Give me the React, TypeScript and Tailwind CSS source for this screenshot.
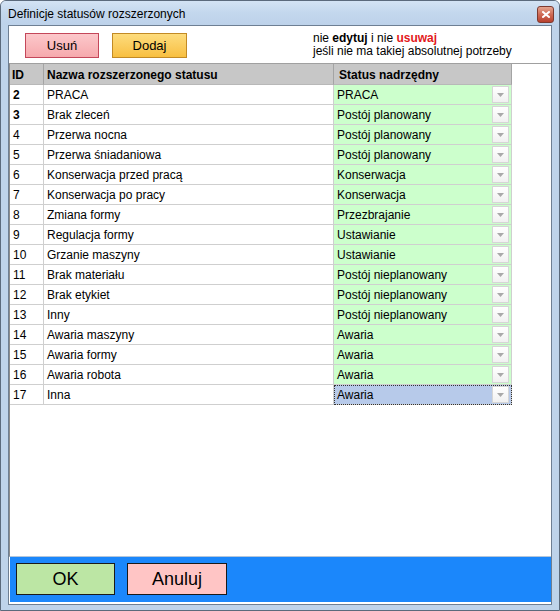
import React from "react";

type Row = { id: string; name: string; status: string; bold?: boolean };

const rows: Row[] = [
  { id: "2", name: "PRACA", status: "PRACA", bold: true },
  { id: "3", name: "Brak zleceń", status: "Postój planowany", bold: true },
  { id: "4", name: "Przerwa nocna", status: "Postój planowany" },
  { id: "5", name: "Przerwa śniadaniowa", status: "Postój planowany" },
  { id: "6", name: "Konserwacja przed pracą", status: "Konserwacja" },
  { id: "7", name: "Konserwacja po pracy", status: "Konserwacja" },
  { id: "8", name: "Zmiana formy", status: "Przezbrajanie" },
  { id: "9", name: "Regulacja formy", status: "Ustawianie" },
  { id: "10", name: "Grzanie maszyny", status: "Ustawianie" },
  { id: "11", name: "Brak materiału", status: "Postój nieplanowany" },
  { id: "12", name: "Brak etykiet", status: "Postój nieplanowany" },
  { id: "13", name: "Inny", status: "Postój nieplanowany" },
  { id: "14", name: "Awaria maszyny", status: "Awaria" },
  { id: "15", name: "Awaria formy", status: "Awaria" },
  { id: "16", name: "Awaria robota", status: "Awaria" },
  { id: "17", name: "Inna", status: "Awaria" },
];

function DropBtn() {
  return (
    <div className="w-[17px] h-[17px] mr-[2px] shrink-0 border border-[#d6d6d6] bg-gradient-to-b from-[#ffffff] to-[#f1f1f1] flex items-center justify-center">
      <svg width="7" height="4" viewBox="0 0 7 4">
        <path d="M0 0 L7 0 L3.5 4 Z" fill="#a9a9a9" />
      </svg>
    </div>
  );
}

export default function App() {
  return (
    <div className="w-[560px] h-[611px] flex flex-col bg-[#bed3ea] border border-[#5b6a7c] rounded-t-[6px] font-['Liberation_Sans',Arial,sans-serif] text-[12px] text-black overflow-hidden">
      {/* title bar */}
      <div className="h-[24px] shrink-0 flex items-center justify-between pl-[7px] pr-[5px] bg-gradient-to-b from-[#d3e3f4] via-[#c3d7ed] to-[#bdd2ea]">
        <span className="text-[12px] leading-none text-black mt-[1px]">Definicje statusów rozszerzonych</span>
        <div className="w-[17px] h-[17px] mt-[2px] rounded-[3px] border border-[#7d3a30] bg-gradient-to-b from-[#e3a48f] via-[#cf6a55] to-[#b8402e] flex items-center justify-center">
          <svg width="8" height="7" viewBox="0 0 8 7">
            <path d="M1 1 L7 6 M7 1 L1 6" stroke="#ffffff" strokeWidth="2" strokeLinecap="square" />
          </svg>
        </div>
      </div>

      {/* client */}
      <div className="flex-1 mx-[7px] mb-[5px] border border-[#6e7f93] bg-white flex flex-col">
        {/* top toolbar */}
        <div className="h-[37px] shrink-0 flex items-start">
          <div className="flex gap-[13px] pl-[16px] pt-[7px]">
            <div className="w-[74px] h-[25px] border border-[#c4475a] bg-gradient-to-b from-[#fcc8cb] to-[#f6a9ad] flex items-center justify-center text-[13px]">
              Usuń
            </div>
            <div className="w-[75px] h-[25px] border border-[#c28a25] bg-gradient-to-b from-[#fddc7c] to-[#f8bf3f] flex items-center justify-center text-[13px]">
              Dodaj
            </div>
          </div>
          <div className="ml-[126px] pt-[6px] leading-[13px] text-[12px]">
            <div>
              nie <b>edytuj</b> i nie <b className="text-[#e3191c]">usuwaj</b>
            </div>
            <div>jeśli nie ma takiej absolutnej potrzeby</div>
          </div>
        </div>

        {/* grid */}
        <div className="flex-1 border-t border-l border-b border-t-[#a0a0a0] border-l-[#8c8c8c] border-b-[#b4c6da]">
          <div className="grid grid-cols-[34px_290px_178px]">
            <div className="h-[21px] bg-[#c7c7c7] border-r border-b border-r-[#a4a4a4] border-b-[#b8b8b8] font-bold pl-[2px] pt-[1px] flex items-center">ID</div>
            <div className="h-[21px] bg-[#c7c7c7] border-r border-b border-r-[#a4a4a4] border-b-[#b8b8b8] font-bold pl-[3px] pt-[1px] flex items-center">Nazwa rozszerzonego statusu</div>
            <div className="h-[21px] bg-[#c7c7c7] border-r border-b border-r-[#a4a4a4] border-b-[#b8b8b8] font-bold pl-[5px] pt-[1px] flex items-center">Status nadrzędny</div>
            {rows.map((r, i) => {
              const last = i === rows.length - 1;
              return (
                <React.Fragment key={r.id}>
                  <div className={`h-[20px] border-r border-b border-[#cfcfcf] pl-[3px] pt-[1px] flex items-center ${r.bold ? "font-bold" : ""}`}>
                    {r.id}
                  </div>
                  <div className="h-[20px] border-r border-b border-[#cfcfcf] pl-[3px] pt-[1px] flex items-center">{r.name}</div>
                  <div className={`h-[20px] border-r border-b border-[#cfcfcf] flex items-center ${last ? "bg-[#b7caea] outline outline-1 outline-dotted outline-[#333] -outline-offset-1" : "bg-[#ccffcc]"}`}>
                    <span className="flex-1 pl-[3px] pt-[1px]">{r.status}</span>
                    <DropBtn />
                  </div>
                </React.Fragment>
              );
            })}
          </div>
        </div>

        {/* bottom panel */}
        <div className="h-[45px] shrink-0 ml-[1px] mb-[2px] bg-[#1b87fb] flex items-start gap-[12px] pl-[6px] pt-[6px]">
          <div className="w-[99px] h-[32px] border border-[#1a1a1a] bg-[#bce6a4] flex items-center justify-center text-[18px]">OK</div>
          <div className="w-[100px] h-[32px] border border-[#1a1a1a] bg-[#ffc5c5] flex items-center justify-center text-[18px]">Anuluj</div>
        </div>
      </div>
    </div>
  );
}
